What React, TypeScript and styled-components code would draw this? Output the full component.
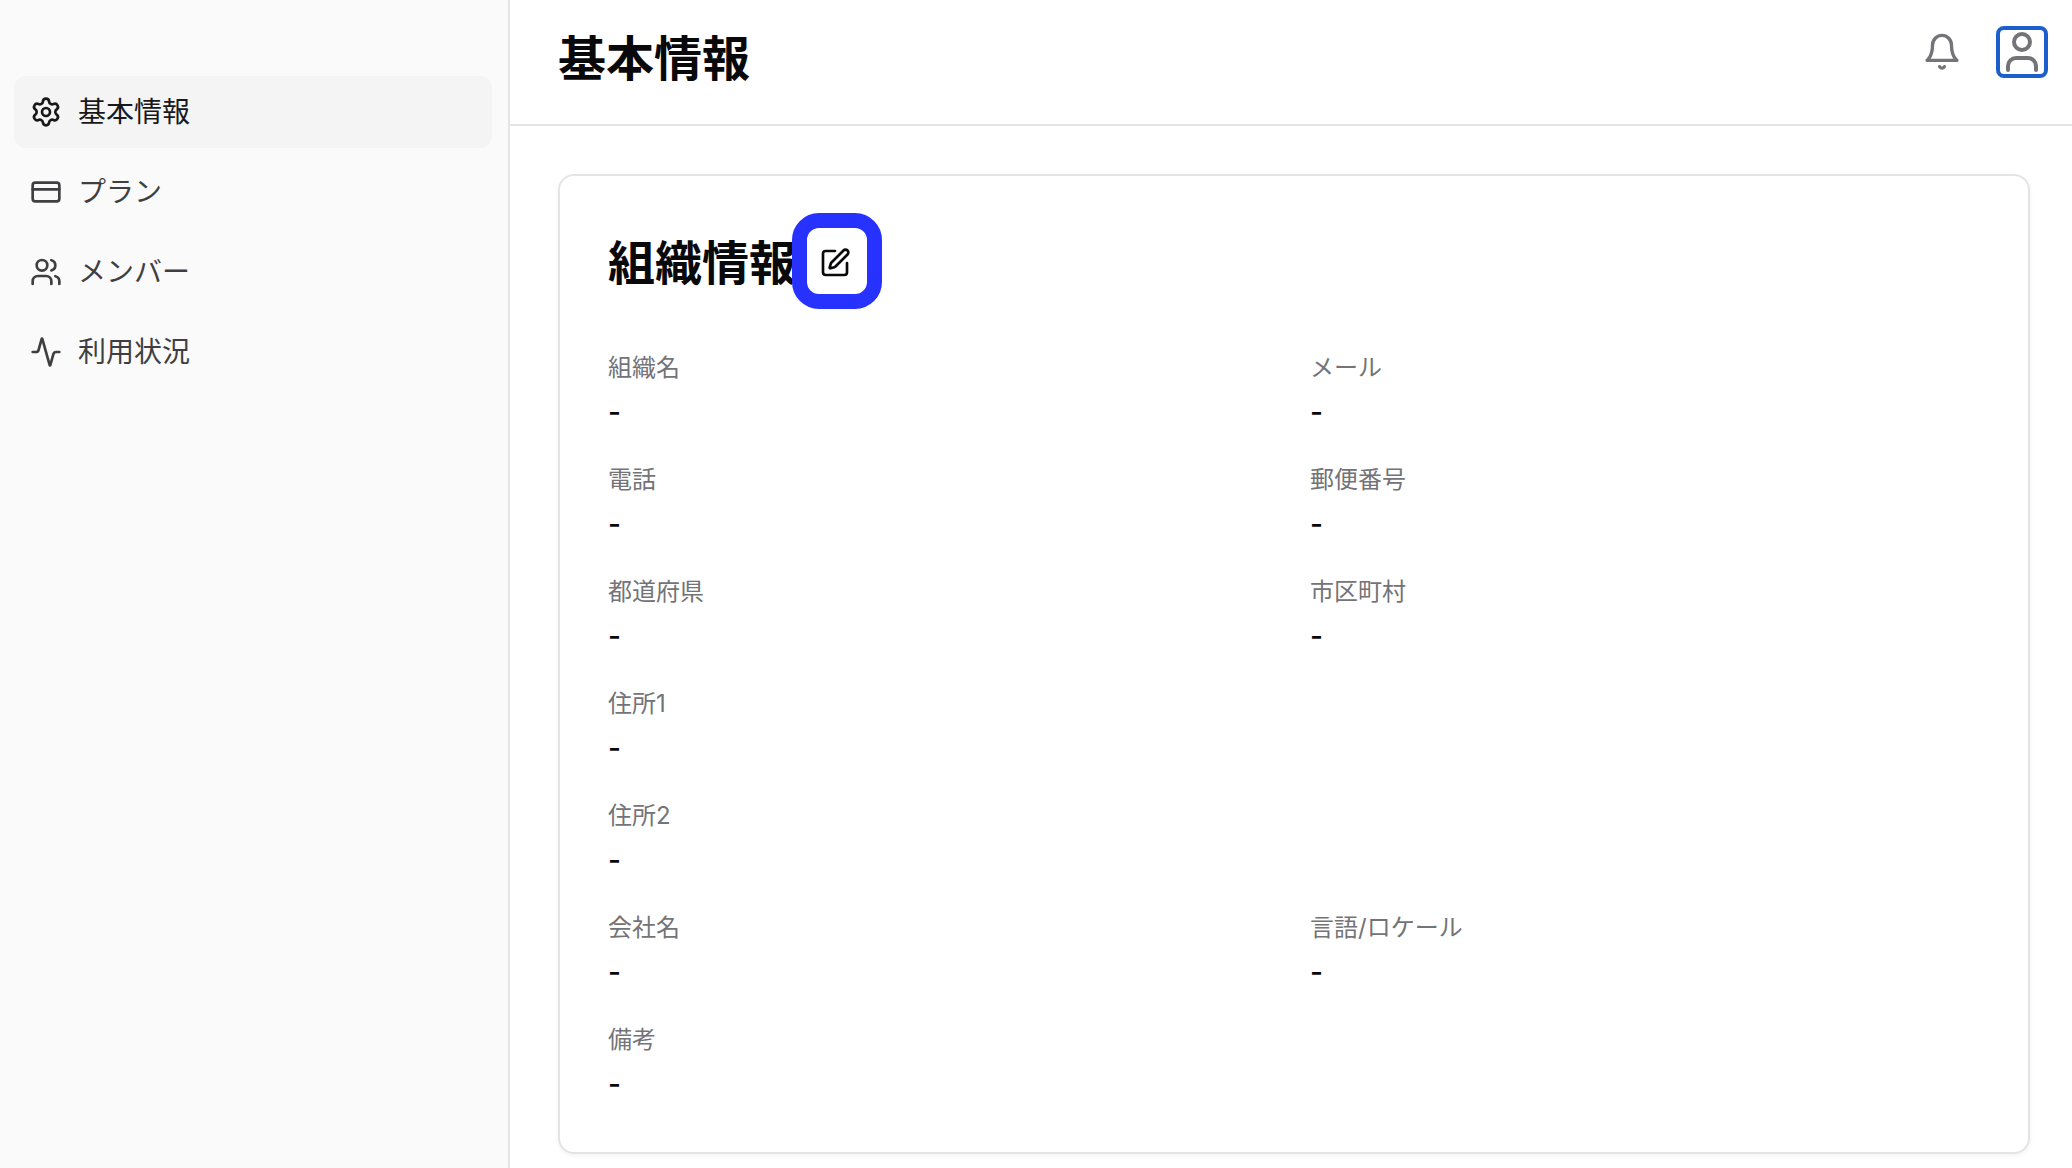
import React from "react";
import styled, { createGlobalStyle } from "styled-components";
import { Activity, CreditCard, Settings, SquarePen, User, Users } from "lucide-react";

const GlobalStyle = createGlobalStyle`
  *, *::before, *::after { box-sizing: border-box; }
  body {
    margin: 0;
    background: #ffffff;
    color: #09090b;
    font-family: Inter, "Noto Sans CJK JP", sans-serif;
  }
  h1, h2, dl, dt, dd, ul { margin: 0; padding: 0; }
`;

const Layout = styled.div`
  display: flex;
  min-height: 100vh;
`;

const Sidebar = styled.nav`
  flex: 0 0 510px;
  padding: 76px 16px 16px 14px;
  background: #fafafa;
  border-right: 2px solid #e4e4e5;
`;

const NavList = styled.ul`
  display: flex;
  flex-direction: column;
  gap: 8px;
  list-style: none;
`;

const NavLink = styled.a<{ $active: boolean }>`
  display: flex;
  align-items: center;
  gap: 16px;
  height: 72px;
  padding: 0 16px;
  border-radius: 12px;
  background: ${(p) => (p.$active ? "#f4f4f4" : "transparent")};
  color: ${(p) => (p.$active ? "#18181a" : "#3f3f42")};
  font-size: 28px;
  line-height: 40px;
  text-decoration: none;
`;

const Main = styled.div`
  flex: 1;
  min-width: 0;
`;

const TopBar = styled.header`
  display: flex;
  align-items: center;
  justify-content: space-between;
  height: 126px;
  padding: 0 24px 20px 48px;
  border-bottom: 2px solid #e4e4e5;
`;

const PageTitle = styled.h1`
  padding-top: 14px;
  font-size: 48px;
  line-height: 64px;
  font-weight: 700;
`;

const Actions = styled.div`
  display: flex;
  align-items: center;
  gap: 34px;
`;

const IconButton = styled.button`
  display: flex;
  align-items: center;
  justify-content: center;
  padding: 0;
  border: 0;
  background: transparent;
  color: #737378;
  svg { flex: none; }
`;

const AvatarButton = styled(IconButton)`
  width: 52px;
  height: 52px;
  border: 4px solid #1b5fcc;
  border-radius: 8px;
`;

const Content = styled.main`
  padding: 48px 42px 14px 48px;
`;

const Card = styled.section`
  padding: 48px;
  border: 2px solid #e4e4e5;
  border-radius: 16px;
  box-shadow: 0 2px 4px rgba(0, 0, 0, 0.05);
`;

const CardHeader = styled.div`
  display: flex;
  align-items: center;
  gap: 7px;
  height: 78px;
  margin-bottom: 50px;
`;

const CardTitle = styled.h2`
  font-size: 47px;
  line-height: 64px;
  font-weight: 700;
`;

const EditButton = styled(IconButton)`
  position: relative;
  width: 64px;
  height: 64px;
  color: #09090b;

  /* Highlight frame drawn over the header */
  &::after {
    content: "";
    position: absolute;
    top: -18px;
    left: -11px;
    width: 90px;
    height: 96px;
    border: 15px solid #2832ff;
    border-radius: 27px;
  }
`;

const Fields = styled.dl`
  display: grid;
  grid-template-columns: 1fr 1fr;
  gap: 32px;
`;

const FieldBox = styled.div<{ $wide?: boolean }>`
  display: flex;
  flex-direction: column;
  gap: 8px;
  grid-column: ${(p) => (p.$wide ? "1 / -1" : "auto")};
`;

const Label = styled.dt`
  font-size: 24px;
  line-height: 32px;
  color: #737378;
`;

const Value = styled.dd`
  font-size: 28px;
  line-height: 40px;
  font-weight: 500;
`;

const navItems = [
  { label: "基本情報", icon: Settings, active: true },
  { label: "プラン", icon: CreditCard, active: false },
  { label: "メンバー", icon: Users, active: false },
  { label: "利用状況", icon: Activity, active: false },
];

const fields = [
  { label: "組織名", value: "-" },
  { label: "メール", value: "-" },
  { label: "電話", value: "-" },
  { label: "郵便番号", value: "-" },
  { label: "都道府県", value: "-" },
  { label: "市区町村", value: "-" },
  { label: "住所1", value: "-", wide: true },
  { label: "住所2", value: "-", wide: true },
  { label: "会社名", value: "-" },
  { label: "言語/ロケール", value: "-" },
  { label: "備考", value: "-", wide: true },
];

const BellIcon = () => (
  <svg width="40" height="40" viewBox="0 0 24 24" fill="none" stroke="currentColor" strokeWidth="2" strokeLinecap="round" strokeLinejoin="round" aria-hidden="true">
    <path d="M6.3 8a5.7 6 0 0 1 11.4 0c0 7 3.3 9 3.3 9H3s3.3-2 3.3-9" />
    <path d="M10.6 20.8q1.4 1.8 2.8 0" />
  </svg>
);

export default function App() {
  return (
    <>
      <GlobalStyle />
      <Layout>
        <Sidebar>
          <NavList>
            {navItems.map(({ label, icon: Icon, active }) => (
              <li key={label}>
                <NavLink href="#" $active={active} aria-current={active ? "page" : undefined}>
                  <Icon size={32} />
                  {label}
                </NavLink>
              </li>
            ))}
          </NavList>
        </Sidebar>
        <Main>
          <TopBar>
            <PageTitle>基本情報</PageTitle>
            <Actions>
              <IconButton type="button">
                <BellIcon />
              </IconButton>
              <AvatarButton type="button">
                <User size={48} />
              </AvatarButton>
            </Actions>
          </TopBar>
          <Content>
            <Card>
              <CardHeader>
                <CardTitle>組織情報</CardTitle>
                <EditButton type="button">
                  <SquarePen size={32} />
                </EditButton>
              </CardHeader>
              <Fields>
                {fields.map((f) => (
                  <FieldBox key={f.label} $wide={f.wide}>
                    <Label>{f.label}</Label>
                    <Value>{f.value}</Value>
                  </FieldBox>
                ))}
              </Fields>
            </Card>
          </Content>
        </Main>
      </Layout>
    </>
  );
}
